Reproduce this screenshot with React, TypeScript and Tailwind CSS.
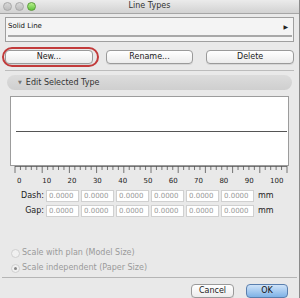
import React from 'react';

const font = { fontFamily: '"DejaVu Sans", "Liberation Sans", sans-serif' };

const Ruler: React.FC = () => {
  const x0 = 15;
  const span = 272;
  const ticks = [];
  for (let i = 0; i <= 100; i += 2) {
    const x = x0 + (span * i) / 100;
    const major = i % 10 === 0;
    ticks.push(
      <line key={i} x1={x} x2={x} y1={0} y2={major ? 7 : 4} stroke="#555" strokeWidth={0.8} />
    );
  }
  return (
    <svg width={300} height={8} className="block">
      <line x1={x0} x2={x0 + span} y1={0.5} y2={0.5} stroke="#777" strokeWidth={1} />
      {ticks}
    </svg>
  );
};

const Btn: React.FC<{ label: string; className?: string }> = ({ label, className = '' }) => (
  <div
    className={`h-[14px] flex items-center justify-center rounded-[4px] border border-[#9a9a9a] bg-gradient-to-b from-white to-[#ececec] text-[8px] text-[#222] shadow-[0_1px_0_rgba(0,0,0,0.08)] ${className}`}
  >
    {label}
  </div>
);

const Row: React.FC<{ label: string }> = ({ label }) => (
  <div className="flex items-center h-[12px]">
    <div className="w-[46px] pr-[2px] text-right text-[8px] text-[#222]">{label}</div>
    <div className="flex gap-[2px]">
      {[0, 1, 2, 3, 4, 5].map(i => (
        <div
          key={i}
          className="w-[33px] h-[12px] bg-white border border-[#d0d0d0] text-[7px] text-[#999] flex items-center pl-[2px]"
        >
          0.0000
        </div>
      ))}
    </div>
    <div className="ml-[4px] text-[8px] text-[#222]">mm</div>
  </div>
);

const App: React.FC = () => {
  const labels = [0, 10, 20, 30, 40, 50, 60, 70, 80, 90, 100];
  return (
    <div style={font} className="w-[300px] h-[298px] bg-[#e9e9e9] border-r border-[#8a8a8a] flex flex-col overflow-hidden">
      {/* title bar */}
      <div className="relative h-[14px] flex items-center justify-center bg-gradient-to-b from-[#ebebeb] to-[#d2d2d2] border-b border-[#a5a5a5]">
        <div className="absolute left-[3px] top-[2px] flex gap-[3px]">
          <div className="w-[9px] h-[9px] rounded-full bg-gradient-to-b from-[#d8d8d8] to-[#bcbcbc] border border-[#a8a8a8]" />
          <div className="w-[9px] h-[9px] rounded-full bg-gradient-to-b from-[#d8d8d8] to-[#bcbcbc] border border-[#a8a8a8]" />
          <div className="w-[9px] h-[9px] rounded-full bg-gradient-to-b from-[#b8f08c] to-[#5fc43a] border border-[#5a9a3a]" />
        </div>
        <span className="text-[8px] text-[#333]">Line Types</span>
      </div>

      {/* list */}
      <div className="mx-[5px] mt-[3px] h-[26px] border border-[#9f9f9f] bg-[#f4f4f4] relative">
        <div className="pl-[2px] pt-[3px] text-[7px] text-[#111]">Solid Line</div>
        <div className="absolute right-[5px] top-[4px] text-[6px] text-[#222]">▶</div>
        <div className="absolute left-[2px] right-[1px] bottom-[4px] h-[2px] bg-[#a8a8a8]" />
      </div>

      {/* buttons */}
      <div className="relative mx-[5px] mt-[8px] grid grid-cols-3 gap-[13px]">
        <Btn label="New..." />
        <Btn label="Rename..." />
        <Btn label="Delete" />
        <div className="absolute left-[-3px] top-[-3px] w-[97px] h-[20px] rounded-[10px] border-2 border-[#c23b3b] pointer-events-none" />
      </div>

      <div className="mx-[5px] mt-[6px] h-px bg-[#bcbcbc]" />

      {/* disclosure */}
      <div className="mx-[7px] mt-[4px] h-[15px] rounded-full bg-gradient-to-b from-[#dcdcdc] to-[#cfcfcf] flex items-center pl-[11px] text-[8px] text-[#333]">
        <span className="text-[5px] text-[#777] mr-[4px]">▼</span>
        Edit Selected Type
      </div>

      {/* preview */}
      <div className="mx-[10px] mt-[6px] h-[72px] bg-white border border-[#9c9c9c] flex items-center">
        <div className="ml-[5px] mr-[1px] flex-1 h-px bg-[#555]" />
      </div>

      <Ruler />
      <div className="relative h-[12px] text-[7px] text-[#222]">
        {labels.map((l, i) => (
          <span key={l} className="absolute top-[2px]" style={{ left: 17 + i * 25.3 }}>
            {l}
          </span>
        ))}
      </div>

      <div className="mt-[4px] flex flex-col gap-[3px]">
        <Row label="Dash:" />
        <Row label="Gap:" />
      </div>

      {/* radios */}
      <div className="mt-[30px] ml-[11px] flex flex-col gap-[3px] text-[8px] text-[#9a9a9a]">
        <div className="flex items-center gap-[2px]">
          <div className="w-[9px] h-[9px] rounded-full border border-[#cfcfcf] bg-[#f0f0f0]" />
          Scale with plan (Model Size)
        </div>
        <div className="flex items-center gap-[2px]">
          <div className="w-[9px] h-[9px] rounded-full border border-[#cfcfcf] bg-[#f0f0f0] flex items-center justify-center">
            <div className="w-[3px] h-[3px] rounded-full bg-[#888]" />
          </div>
          Scale independent (Paper Size)
        </div>
      </div>

      <div className="mx-[2px] mt-[3px] h-px bg-[#b5b5b5]" />

      <div className="mt-[6px] mr-[11px] flex justify-end gap-[12px]">
        <Btn label="Cancel" className="w-[43px]" />
        <div className="w-[42px] h-[14px] flex items-center justify-center rounded-[4px] border border-[#5a7fae] bg-gradient-to-b from-[#cfe3f8] to-[#7fb2e6] text-[8px] text-[#111]">
          OK
        </div>
      </div>
    </div>
  );
};

export default App;
